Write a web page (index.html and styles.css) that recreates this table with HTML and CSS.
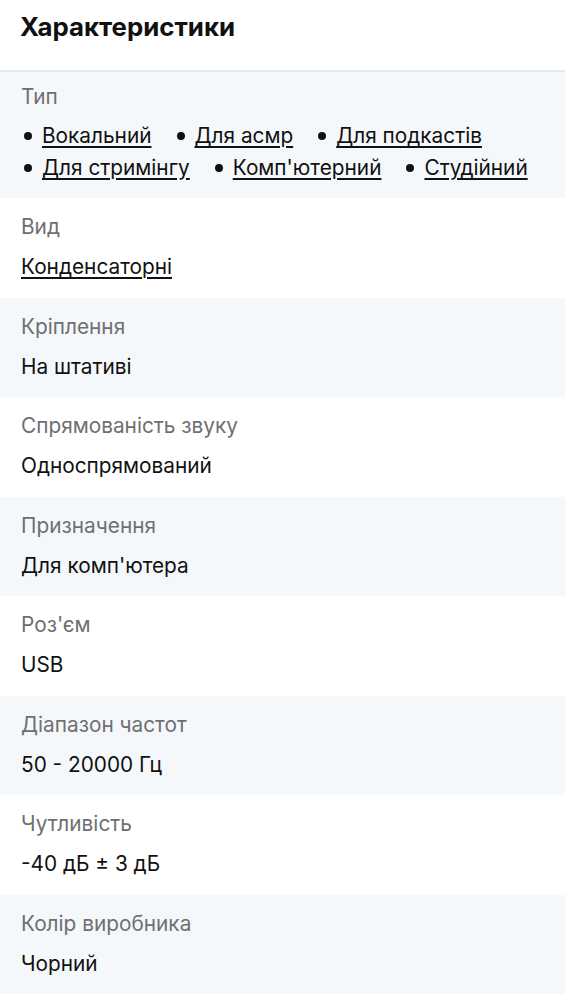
FILE: index.html
```html
<!DOCTYPE html>
<html lang="uk">
<head>
<meta charset="utf-8">
<link rel="stylesheet" href="styles.css">
</head>
<body>
<section class="specs">
  <h2 class="specs-title">Характеристики</h2>
  <dl class="spec-list">
    <div class="spec-row alt">
      <dt class="spec-label">Тип</dt>
      <dd class="spec-value">
        <ul class="tags">
          <li><a href="#">Вокальний</a></li>
          <li><a href="#">Для асмр</a></li>
          <li><a href="#">Для подкастів</a></li>
          <li><a href="#">Для стримінгу</a></li>
          <li><a href="#">Комп'ютерний</a></li>
          <li><a href="#">Студійний</a></li>
        </ul>
      </dd>
    </div>
    <div class="spec-row">
      <dt class="spec-label">Вид</dt>
      <dd class="spec-value"><a href="#">Конденсаторні</a></dd>
    </div>
    <div class="spec-row alt">
      <dt class="spec-label">Кріплення</dt>
      <dd class="spec-value">На штативі</dd>
    </div>
    <div class="spec-row">
      <dt class="spec-label">Спрямованість звуку</dt>
      <dd class="spec-value">Односпрямований</dd>
    </div>
    <div class="spec-row alt">
      <dt class="spec-label">Призначення</dt>
      <dd class="spec-value">Для комп'ютера</dd>
    </div>
    <div class="spec-row">
      <dt class="spec-label">Роз'єм</dt>
      <dd class="spec-value">USB</dd>
    </div>
    <div class="spec-row alt">
      <dt class="spec-label">Діапазон частот</dt>
      <dd class="spec-value">50 - 20000 Гц</dd>
    </div>
    <div class="spec-row">
      <dt class="spec-label">Чутливість</dt>
      <dd class="spec-value">-40 дБ ± 3 дБ</dd>
    </div>
    <div class="spec-row alt">
      <dt class="spec-label">Колір виробника</dt>
      <dd class="spec-value">Чорний</dd>
    </div>
  </dl>
</section>
</body>
</html>
```

FILE: styles.css
```css
* { box-sizing: border-box; }
html, body { margin: 0; padding: 0; background: #fff; }
body {
  font-family: Inter, "Noto Sans", Roboto, sans-serif;
  color: #111;
  -webkit-font-smoothing: antialiased;
}
.specs-title {
  margin: 0;
  padding: 12px 20px 0;
  height: 72px;
  font-size: 25.8px;
  line-height: 30px;
  font-weight: 700;
  color: #111;
  border-bottom: 2px solid #e6e7e9;
}
.spec-list { margin: 0; padding: 0; }
.spec-row {
  padding: 15px 21px 14px;
  display: flex;
  flex-direction: column;
  gap: 11px;
  min-height: 99.5px;
}
.spec-row.alt { background: #f5f8fb; }
.spec-row:first-child { padding-top: 11px; gap: 10px; padding-bottom: 15px; }
.spec-label {
  margin: 0;
  font-size: 20.8px;
  line-height: 28px;
  color: #6f6f72;
}
.spec-value {
  margin: 0;
  font-size: 20.8px;
  line-height: 30px;
  color: #111;
}
.spec-value a {
  color: #111;
  text-decoration: underline;
  text-underline-offset: 3px;
  text-decoration-thickness: 1.5px;
}
.tags {
  list-style: none;
  margin: 0;
  padding: 0;
  display: flex;
  flex-wrap: wrap;
  column-gap: 22px;
  row-gap: 2px;
}
.tags li {
  display: flex;
  align-items: center;
  line-height: 30px;
}
.tags li::before {
  content: "";
  width: 8px;
  height: 8px;
  border-radius: 50%;
  background: #111;
  margin: 0 10px 0 3px;
}
```
